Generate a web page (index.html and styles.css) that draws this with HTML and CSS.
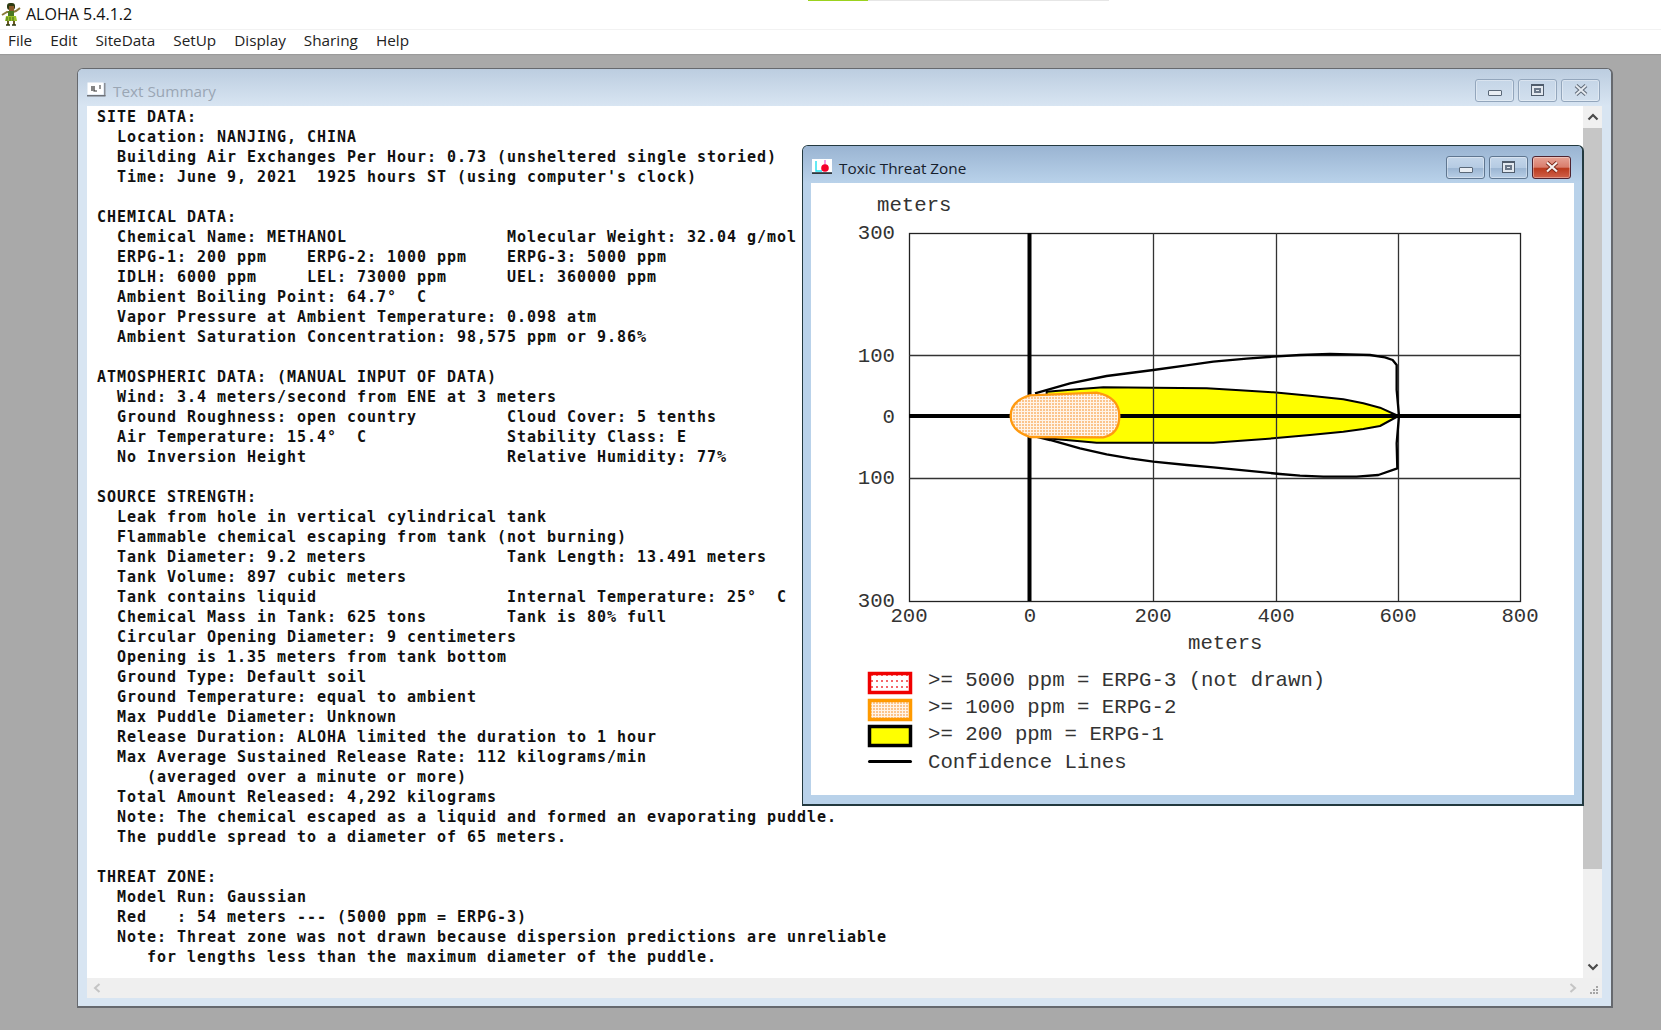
FILE: index.html
```html
<!DOCTYPE html>
<html lang="en">
<head>
<meta charset="utf-8">
<title>ALOHA 5.4.1.2</title>
<link rel="stylesheet" href="styles.css">
</head>
<body>
<div class="app">
  <div class="progress"><div class="progress-fill"></div></div>
  <header class="appbar">
    <svg class="app-icon" viewBox="0 0 20 24" width="20" height="24" aria-hidden="true">
      <rect x="6" y="1" width="8" height="7" rx="3" fill="#2c3a10"/>
      <rect x="8" y="4" width="5" height="5" fill="#8a5a2a"/>
      <path d="M1 13 L6 10 L8 10 M12 10 L15 9 L19 6" stroke="#8a7a3a" stroke-width="2" fill="none"/>
      <rect x="7" y="9" width="6" height="5" fill="#4a7a20"/>
      <path d="M5 14 H15 L16 19 H4 Z" fill="#9ac22a"/>
      <path d="M6 15 V19 M9 15 V19 M12 15 V19" stroke="#3d6a1a" stroke-width="1"/>
      <path d="M7 19 V23 M13 19 V23" stroke="#6a5a20" stroke-width="2"/>
      <path d="M5 23 H9 M11 23 H15" stroke="#2c3a10" stroke-width="1.5"/>
    </svg>
    <span class="app-title">ALOHA 5.4.1.2</span>
  </header>
  <nav class="menubar">
    <span class="menu-item">File</span>
    <span class="menu-item">Edit</span>
    <span class="menu-item">SiteData</span>
    <span class="menu-item">SetUp</span>
    <span class="menu-item">Display</span>
    <span class="menu-item">Sharing</span>
    <span class="menu-item">Help</span>
  </nav>
  <main class="mdi">
    <section class="win win-text">
      <div class="win-title">
        <svg class="win-icon" viewBox="0 0 19 15" width="19" height="15" aria-hidden="true">
          <rect x="0.5" y="0.5" width="16" height="12" fill="#fff"/>
          <rect x="17" y="1" width="1.5" height="13" fill="#8b8f96"/>
          <rect x="0" y="13" width="18.5" height="1.5" fill="#6e7278"/>
          <path d="M5 4 V9 M7 4 V9 H10 M12 4 H14 M12 6 H14" stroke="#333" stroke-width="1.2" fill="none"/>
        </svg>
        <span class="win-name win-name-off">Text Summary</span>
        <div class="win-controls">
          <button class="ctl ctl-off" type="button" aria-label="Minimize"><span class="g-min"></span></button>
          <button class="ctl ctl-off" type="button" aria-label="Maximize"><span class="g-max"></span></button>
          <button class="ctl ctl-off" type="button" aria-label="Close"><svg class="g-x" viewBox="0 0 14 12" width="14" height="12"><path d="M2 1.5 L12 10.5 M12 1.5 L2 10.5" stroke="#5f6a78" stroke-width="4"/><path d="M2 1.5 L12 10.5 M12 1.5 L2 10.5" stroke="#e6ebf1" stroke-width="2"/></svg></button>
        </div>
      </div>
      <div class="win-main">
        <pre class="report">SITE DATA:
  Location: NANJING, CHINA
  Building Air Exchanges Per Hour: 0.73 (unsheltered single storied)
  Time: June 9, 2021  1925 hours ST (using computer's clock)

CHEMICAL DATA:
  Chemical Name: METHANOL                Molecular Weight: 32.04 g/mol
  ERPG-1: 200 ppm    ERPG-2: 1000 ppm    ERPG-3: 5000 ppm
  IDLH: 6000 ppm     LEL: 73000 ppm      UEL: 360000 ppm
  Ambient Boiling Point: 64.7°  C
  Vapor Pressure at Ambient Temperature: 0.098 atm
  Ambient Saturation Concentration: 98,575 ppm or 9.86%

ATMOSPHERIC DATA: (MANUAL INPUT OF DATA)
  Wind: 3.4 meters/second from ENE at 3 meters
  Ground Roughness: open country         Cloud Cover: 5 tenths
  Air Temperature: 15.4°  C              Stability Class: E
  No Inversion Height                    Relative Humidity: 77%

SOURCE STRENGTH:
  Leak from hole in vertical cylindrical tank
  Flammable chemical escaping from tank (not burning)
  Tank Diameter: 9.2 meters              Tank Length: 13.491 meters
  Tank Volume: 897 cubic meters
  Tank contains liquid                   Internal Temperature: 25°  C
  Chemical Mass in Tank: 625 tons        Tank is 80% full
  Circular Opening Diameter: 9 centimeters
  Opening is 1.35 meters from tank bottom
  Ground Type: Default soil
  Ground Temperature: equal to ambient
  Max Puddle Diameter: Unknown
  Release Duration: ALOHA limited the duration to 1 hour
  Max Average Sustained Release Rate: 112 kilograms/min
     (averaged over a minute or more)
  Total Amount Released: 4,292 kilograms
  Note: The chemical escaped as a liquid and formed an evaporating puddle.
  The puddle spread to a diameter of 65 meters.

THREAT ZONE:
  Model Run: Gaussian
  Red   : 54 meters --- (5000 ppm = ERPG-3)
  Note: Threat zone was not drawn because dispersion predictions are unreliable
     for lengths less than the maximum diameter of the puddle.</pre>
        <div class="vscroll">
          <div class="vs-arrow"><svg viewBox="0 0 12 8" width="12" height="8"><path d="M1.5 6.5 L6 2 L10.5 6.5" fill="none" stroke="#4a4a4a" stroke-width="2.2"/></svg></div>
          <div class="vs-thumb"></div>
          <div class="vs-rest"><svg viewBox="0 0 12 8" width="12" height="8"><path d="M1.5 1.5 L6 6 L10.5 1.5" fill="none" stroke="#4a4a4a" stroke-width="2.2"/></svg></div>
        </div>
        <div class="hscroll">
          <svg viewBox="0 0 8 10" width="8" height="10"><path d="M6.5 1 L2 5 L6.5 9" fill="none" stroke="#c4c4c4" stroke-width="2"/></svg>
          <svg viewBox="0 0 8 10" width="8" height="10"><path d="M1.5 1 L6 5 L1.5 9" fill="none" stroke="#c4c4c4" stroke-width="2"/></svg>
        </div>
        <div class="grip">
          <svg viewBox="0 0 11 11" width="11" height="11"><path d="M8 1h2v2H8zM8 4h2v2H8zM5 4h2v2H5zM8 7h2v2H8zM5 7h2v2H5zM2 7h2v2H2z" fill="#a5a5a5"/></svg>
        </div>
      </div>
    </section>

    <section class="win win-chart">
      <div class="win-title">
        <svg class="win-icon" viewBox="0 0 20 15" width="20" height="15" aria-hidden="true">
          <rect x="0" y="0" width="20" height="13" fill="#fff"/>
          <path d="M4 2 V12 H10" stroke="#22e0f0" stroke-width="1.4" fill="none"/>
          <path d="M13 1 V12" stroke="#f05ad0" stroke-width="1.2"/>
          <circle cx="13" cy="9" r="3.8" fill="#f5002a"/>
          <rect x="0" y="13.4" width="20" height="1.4" fill="#111"/>
        </svg>
        <span class="win-name">Toxic Threat Zone</span>
        <div class="win-controls">
          <button class="ctl" type="button" aria-label="Minimize"><span class="g-min"></span></button>
          <button class="ctl" type="button" aria-label="Maximize"><span class="g-max"></span></button>
          <button class="ctl ctl-close" type="button" aria-label="Close"><svg class="g-x" viewBox="0 0 14 12" width="14" height="12"><path d="M2 1.5 L12 10.5 M12 1.5 L2 10.5" stroke="#7d2a1c" stroke-width="4"/><path d="M2 1.5 L12 10.5 M12 1.5 L2 10.5" stroke="#f6f2f0" stroke-width="2.2"/></svg></button>
        </div>
      </div>
      <div class="chart-client">
        <svg class="chart" viewBox="811 183 763 612" width="763" height="612" role="img" aria-label="Toxic threat zone plot">
          <defs>
            <pattern id="dots-orange" width="3" height="3" patternUnits="userSpaceOnUse">
              <rect width="3" height="3" fill="#fff4e8"/>
              <rect width="2" height="2" fill="#fbc48c"/>
            </pattern>
            <pattern id="dots-orange-scaled" width="9" height="9" patternUnits="userSpaceOnUse">
              <rect width="9" height="9" fill="#fff4e8"/>
              <rect width="6" height="6" fill="#fbc48c"/>
            </pattern>
            <pattern id="dots-red" width="5" height="6" patternUnits="userSpaceOnUse">
              <rect width="5" height="6" fill="#fff"/>
              <rect x="1" y="2" width="2" height="2" fill="#f4676a"/>
            </pattern>
          </defs>

          <rect class="plot-frame" x="909.5" y="233.5" width="611" height="368"/>
          <g transform="translate(980 340) scale(0.33333)">
            <path class="zone-yellow" d="M300 147 L370 142 L520 143 L680 145 L780 151 L880 157 L990 167 L1090 178 L1150 190 L1200 203 L1255 228 L1200 258 L1150 267 L1090 275 L990 285 L880 295 L700 308 L350 308 L200 295 L200 155 Z"/>
          </g>
          <g class="grid">
            <path d="M1153.5 233 V601 M1276.5 233 V601 M1398.5 233 V601 M909 355.5 H1521 M909 478.5 H1521"/>
          </g>
          <g class="axis">
            <path d="M1029.5 233 V601 M909 416 H1521"/>
          </g>
          <g transform="translate(980 340) scale(0.33333)">
            <path class="confidence" d="M165 160 L270 130 L380 108 L520 90 L620 76 L700 65 L800 56 L880 50 L960 45 L1050 42 L1110 43 L1170 45 L1215 52 L1238 60 L1250 75 L1250 150 L1257 228 L1250 310 L1252 385 L1195 405 L1130 410 L1030 410 L960 407 L900 402 L800 392 L700 382 L620 375 L520 365 L450 355 L380 343 L300 325 L210 300 L150 285"/>
            <path class="zone-orange" fill="url(#dots-orange-scaled)" d="M150 166 L350 158 Q418 172 418 228 Q418 282 370 292 L150 291 Q92 272 92 228 Q92 182 150 166 Z"/>
          </g>

          <text class="lbl" x="877" y="211">meters</text>
          <text class="lbl lbl-end" x="895" y="239">300</text>
          <text class="lbl lbl-end" x="895" y="362">100</text>
          <text class="lbl lbl-end" x="895" y="423">0</text>
          <text class="lbl lbl-end" x="895" y="484">100</text>
          <text class="lbl lbl-end" x="895" y="607">300</text>
          <text class="lbl lbl-mid" x="909" y="622">200</text>
          <text class="lbl lbl-mid" x="1030" y="622">0</text>
          <text class="lbl lbl-mid" x="1153" y="622">200</text>
          <text class="lbl lbl-mid" x="1276" y="622">400</text>
          <text class="lbl lbl-mid" x="1398" y="622">600</text>
          <text class="lbl lbl-mid" x="1520" y="622">800</text>
          <text class="lbl" x="1188" y="649">meters</text>

          <rect class="swatch" x="869.5" y="673.5" width="41" height="19" fill="url(#dots-red)" stroke="#f00000"/>
          <rect class="swatch" x="869.5" y="700.5" width="41" height="19" fill="url(#dots-orange)" stroke="#ff9a00"/>
          <rect class="swatch" x="869.5" y="726.5" width="41" height="19" fill="#ffff00" stroke="#000"/>
          <rect x="868" y="760" width="44" height="3" rx="1.5" fill="#000"/>
          <text class="lbl" x="928" y="686">&gt;= 5000 ppm = ERPG-3 (not drawn)</text>
          <text class="lbl" x="928" y="713">&gt;= 1000 ppm = ERPG-2</text>
          <text class="lbl" x="928" y="740">&gt;= 200 ppm = ERPG-1</text>
          <text class="lbl" x="928" y="768">Confidence Lines</text>
        </svg>
      </div>
    </section>
  </main>
</div>
</body>
</html>
```
FILE: styles.css
```css
* { box-sizing: border-box; }

html, body {
  margin: 0;
  height: 100%;
  overflow: hidden;
}

body {
  font-family: "Open Sans", "Noto Sans", sans-serif;
  color: #1a1a1a;
  background: #fff;
}

.app {
  position: relative;
  display: flex;
  flex-direction: column;
  height: 100vh;
}

.progress {
  position: absolute;
  left: 808px;
  top: 0;
  width: 301px;
  height: 1px;
  background: #e6e6e6;
}

.progress-fill {
  width: 60px;
  height: 100%;
  background: #9bd21e;
}

.appbar {
  display: flex;
  align-items: center;
  gap: 5px;
  height: 30px;
  padding: 0 0 2px 1px;
  background: #fff;
  border-bottom: 1px solid #f2f2f2;
}

.app-icon { flex: none; }

.app-title {
  font-size: 16px;
  color: #111;
}

.menubar {
  display: flex;
  align-items: center;
  gap: 18px;
  height: 24px;
  padding: 0 0 4px 8px;
  background: #fff;
  font-size: 15.3px;
  color: #222;
  box-shadow: 0 1px 1px rgba(0, 0, 0, 0.08);
  position: relative;
  z-index: 1;
}

.mdi {
  position: relative;
  flex: 1;
  min-height: 0;
  display: flex;
  padding: 14px 48px 22px 77px;
  background: #a9a9a9;
}

.win {
  display: flex;
  flex-direction: column;
  border: 1px solid #66696e;
  border-right-width: 2px;
  border-bottom-width: 2px;
  border-radius: 6px 6px 0 0;
}

.win-text {
  flex: 1;
  min-width: 0;
  background: #d8e5f2;
}

.win-chart {
  position: absolute;
  left: 802px;
  top: 91px;
  width: 782px;
  height: 661px;
  background: #b9d2ea;
  border-color: #23393f;
}

.win-title {
  flex: none;
  display: flex;
  align-items: center;
  height: 37px;
  padding: 0 11px 0 9px;
  border-radius: 5px 5px 0 0;
  background: linear-gradient(#bccde0, #d8e5f2);
}

.win-chart .win-title {
  background: linear-gradient(#9ab4d2, #b9d2ea);
}

.win-icon { flex: none; margin-top: 4px; }

.win-name {
  margin-left: 7px;
  margin-top: 7px;
  font-size: 15.3px;
  color: #16202c;
}

.win-name-off { color: #9aa6b4; }

.win-controls {
  display: flex;
  gap: 4px;
  margin-left: auto;
  margin-top: 6px;
}

.ctl {
  display: flex;
  align-items: center;
  justify-content: center;
  width: 39px;
  height: 23px;
  padding: 0;
  border: 1px solid #5f7690;
  border-radius: 3px;
  background: linear-gradient(#c4d6ea 0, #b5cbe3 50%, #9cb6d3 55%, #b8cee6 100%);
  box-shadow: inset 0 0 0 1px rgba(255, 255, 255, 0.35);
}

.ctl-off {
  border-color: #93a6bc;
  background: linear-gradient(#c5d5e7, #d2e0ee);
}

.ctl-close {
  border-color: #4f2330;
  background: linear-gradient(#e6a396 0, #d97d6c 48%, #bb3a1e 55%, #d0614a 100%);
}

.g-min {
  display: block;
  width: 14px;
  height: 6px;
  margin-top: 5px;
  border: 1px solid #5a6878;
  border-radius: 1px;
  background: #e8edf3;
}

.g-max {
  display: block;
  width: 13px;
  height: 12px;
  margin-bottom: 2px;
  border: 1px solid #4f5c6c;
  border-top-width: 2px;
  background: #e2e8ef;
  box-shadow: inset 0 0 0 2px #e2e8ef, inset 0 0 0 4px #6a7788;
}

.g-x { display: block; margin-bottom: 2px; }

.win-main {
  flex: 1;
  min-height: 0;
  display: grid;
  grid-template-columns: 1fr 19px;
  grid-template-rows: 1fr 20px;
  margin: 0 9px 8px;
}

.report {
  margin: 0;
  padding: 1px 0 0 10px;
  overflow: hidden;
  background: #fff;
  font-family: "DejaVu Sans Mono", "Liberation Mono", monospace;
  font-weight: 700;
  font-size: 15px;
  line-height: 20px;
  letter-spacing: 0.97px;
  color: #111;
}

.vscroll {
  display: flex;
  flex-direction: column;
  background: #f0f0f0;
}

.vs-arrow {
  display: flex;
  justify-content: center;
  align-items: center;
  height: 22px;
}

.vs-thumb {
  height: 741px;
  background: #c6c6c6;
}

.vs-rest {
  flex: 1;
  display: flex;
  justify-content: center;
  align-items: flex-end;
  padding-bottom: 7px;
}

.hscroll {
  display: flex;
  justify-content: space-between;
  align-items: center;
  padding: 0 6px 0 6px;
  background: #efefef;
}

.grip {
  display: flex;
  align-items: flex-end;
  justify-content: flex-end;
  padding: 0 3px 2px 0;
  background: #efefef;
}

.chart-client {
  flex: 1;
  margin: 0 8px 9px;
  min-height: 0;
  background: #fff;
}

.chart { display: block; }

.plot-frame {
  fill: #fff;
  stroke: #222;
  stroke-width: 1.3;
}

.zone-yellow {
  fill: #ffff00;
  stroke: #000;
  stroke-width: 6;
  stroke-linejoin: round;
}

.grid path {
  fill: none;
  stroke: #333;
  stroke-width: 1.3;
}

.axis path {
  fill: none;
  stroke: #000;
  stroke-width: 4;
}

.confidence {
  fill: none;
  stroke: #000;
  stroke-width: 7;
  stroke-linejoin: round;
}

.zone-orange {
  stroke: #ff9a10;
  stroke-width: 7;
}

.lbl {
  font-family: "Liberation Mono", "Courier New", monospace;
  font-size: 20.7px;
  fill: #333;
}

.lbl-end { text-anchor: end; }
.lbl-mid { text-anchor: middle; }

.swatch { stroke-width: 3.5; }
```
